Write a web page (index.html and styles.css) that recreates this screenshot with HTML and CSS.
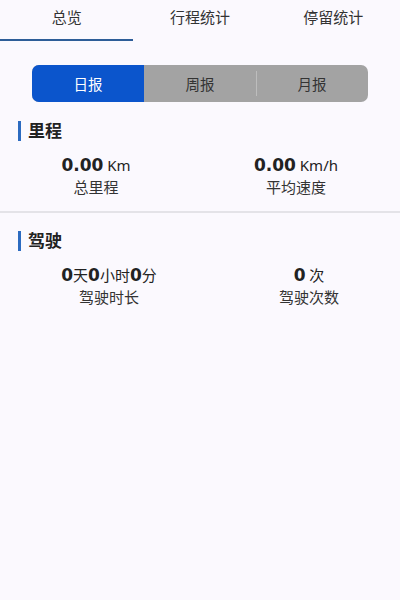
FILE: index.html
```html
<!DOCTYPE html>
<html lang="zh-CN">

<head>
    <meta charset="UTF-8" />
    <meta name="viewport" content="width=device-width, initial-scale=1.0" />
    <title>统计</title>
    <link rel="stylesheet" href="styles.css">
</head>

<body>

    <div class="tabs">
        <div class="tab active">总览</div>
        <div class="tab">行程统计</div>
        <div class="tab">停留统计</div>
    </div>

    <div class="segment-wrap">
        <div class="segment">
            <div class="seg active">日报</div>
            <div class="seg">周报</div>
            <div class="seg">月报</div>
        </div>
    </div>

    <div class="block">
        <h3 class="block-title">里程</h3>
        <div class="stats mileage">
            <div class="stat">
                <div class="value"><b>0.00</b> Km</div>
                <div class="label">总里程</div>
            </div>
            <div class="stat">
                <div class="value"><b>0.00</b> Km/h</div>
                <div class="label">平均速度</div>
            </div>
        </div>
    </div>

    <div class="block">
        <h3 class="block-title">驾驶</h3>
        <div class="stats driving">
            <div class="stat">
                <div class="value"><b>0</b>天<b>0</b>小时<b>0</b>分</div>
                <div class="label">驾驶时长</div>
            </div>
            <div class="stat">
                <div class="value"><b>0</b> 次</div>
                <div class="label">驾驶次数</div>
            </div>
        </div>
    </div>

</body>

</html>
```

FILE: styles.css
```css
* {
    box-sizing: border-box;
    margin: 0;
    padding: 0;
}

html,
body {
    height: 100%;
    background: #fbf9fe;
    font-family: "Noto Sans", "Noto Sans CJK SC", sans-serif;
    color: #222;
}

.tabs {
    display: flex;
    height: 41px;
}

.tab {
    flex: 1;
    text-align: center;
    font-size: 15px;
    line-height: 35px;
    color: #333;
    border-bottom: 2px solid transparent;
}

.tab.active {
    border-bottom-color: #2d5d98;
}

.segment-wrap {
    padding: 24px 32px 0;
}

.segment {
    display: flex;
    height: 37px;
    background: #a3a3a3;
    border-radius: 7px;
    overflow: hidden;
}

.seg {
    flex: 1;
    display: flex;
    align-items: center;
    justify-content: center;
    font-size: 14.5px;
    color: #333;
    position: relative;
}

.seg + .seg + .seg::before {
    content: "";
    position: absolute;
    left: 0;
    top: 6px;
    bottom: 6px;
    width: 1px;
    background: #bdbdbd;
}

.seg.active {
    background: #0b55cc;
    color: #fff;
}

.block {
    padding: 19px 0 14px;
}

.block + .block {
    border-top: 2px solid #e4e3e8;
    padding-top: 18px;
}

.block-title {
    margin-left: 18px;
    padding-left: 7px;
    border-left: 3px solid #2c6bc0;
    font-size: 17px;
    line-height: 20px;
    font-weight: bold;
    color: #222;
}

.stats {
    display: grid;
    margin-top: 12px;
}

.stats.mileage {
    grid-template-columns: 192px 1fr;
}

.stats.driving {
    grid-template-columns: 218px 1fr;
}

.stat {
    text-align: center;
}

.value {
    font-size: 15px;
    line-height: 24px;
    color: #222;
}

.value b {
    font-family: "DejaVu Sans", "Noto Sans CJK SC", sans-serif;
    font-size: 17px;
    font-weight: bold;
}

.label {
    font-size: 15px;
    line-height: 20px;
    color: #333;
}
```
